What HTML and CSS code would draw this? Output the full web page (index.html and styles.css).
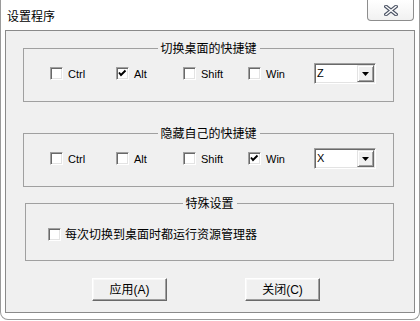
FILE: index.html
```html
<!DOCTYPE html>
<html lang="zh-CN">
<head>
<meta charset="utf-8">
<title>设置程序</title>
<link rel="stylesheet" href="styles.css">
</head>
<body>
<div class="window">
  <div class="titlebar">
    <span class="title">设置程序</span>
    <div class="close">
      <svg width="14" height="11" viewBox="0 0 14 11">
        <path d="M2 1.5 L12 9.5 M12 1.5 L2 9.5" stroke="#4d5566" stroke-width="3.6" stroke-linecap="square" fill="none"/>
        <path d="M2 1.5 L12 9.5 M12 1.5 L2 9.5" stroke="#ffffff" stroke-width="1.4" stroke-linecap="square" fill="none"/>
      </svg>
    </div>
  </div>
  <div class="panel">
    <div class="group g1">
      <span class="gtitle">切换桌面的快捷键</span>
      <div class="row">
        <div class="chk"><span class="box"></span><span class="lbl">Ctrl</span></div>
        <div class="chk"><span class="box"><svg class="tick" width="11" height="11" viewBox="0 0 11 11"><polyline points="2,4.5 4,7 8.5,2.5" fill="none" stroke="#000" stroke-width="1.9"/></svg></span><span class="lbl">Alt</span></div>
        <div class="chk"><span class="box"></span><span class="lbl">Shift</span></div>
        <div class="chk"><span class="box"></span><span class="lbl">Win</span></div>
        <div class="combo"><span class="val">Z</span><span class="drop"><svg width="7" height="4" viewBox="0 0 7 4"><path d="M0 0 H7 L3.5 4 Z" fill="#000"/></svg></span></div>
      </div>
    </div>
    <div class="group g2">
      <span class="gtitle">隐藏自己的快捷键</span>
      <div class="row">
        <div class="chk"><span class="box"></span><span class="lbl">Ctrl</span></div>
        <div class="chk"><span class="box"></span><span class="lbl">Alt</span></div>
        <div class="chk"><span class="box"></span><span class="lbl">Shift</span></div>
        <div class="chk"><span class="box"><svg class="tick" width="11" height="11" viewBox="0 0 11 11"><polyline points="2,4.5 4,7 8.5,2.5" fill="none" stroke="#000" stroke-width="1.9"/></svg></span><span class="lbl">Win</span></div>
        <div class="combo"><span class="val">X</span><span class="drop"><svg width="7" height="4" viewBox="0 0 7 4"><path d="M0 0 H7 L3.5 4 Z" fill="#000"/></svg></span></div>
      </div>
    </div>
    <div class="group g3">
      <span class="gtitle">特殊设置</span>
      <div class="chk wide"><span class="box"></span><span class="cjk">每次切换到桌面时都运行资源管理器</span></div>
    </div>
    <div class="buttons">
      <button class="btn">应用(A)</button>
      <button class="btn">关闭(C)</button>
    </div>
  </div>
</div>
</body>
</html>
```

FILE: styles.css
```css
* { box-sizing: border-box; }
html, body { margin: 0; padding: 0; background: #ffffff; }
body {
  width: 420px;
  height: 321px;
  overflow: hidden;
  font-family: "Liberation Sans", "Noto Sans CJK SC", sans-serif;
  color: #000;
}
.window {
  width: 420px;
  height: 320px;
  background: #ffffff;
  border: 1px solid #9a9a9a;
  border-top: none;
  border-radius: 0 0 8px 8px;
  display: flex;
  flex-direction: column;
}
.titlebar {
  height: 30px;
  display: flex;
  align-items: flex-start;
}
.title {
  font-family: "Noto Sans CJK SC", sans-serif;
  font-size: 12px;
  line-height: 14px;
  padding: 9px 0 0 6px;
  color: #000;
}
.close {
  margin-left: auto;
  margin-right: 5px;
  width: 47px;
  height: 21px;
  border: 1px solid #8d8d8d;
  border-top: none;
  border-radius: 0 0 4px 4px;
  background: linear-gradient(#ffffff, #f1f1f1);
  display: flex;
  align-items: center;
  justify-content: center;
}
.panel {
  margin: 0 4px;
  width: 410px;
  height: 283px;
  border: 1px solid #8a8a8a;
  background: #f0f0f0;
  padding-top: 17px;
  display: flex;
  flex-direction: column;
}
.group {
  position: relative;
  margin-left: 17px;
  width: 371px;
  height: 54px;
  border: 1px solid #a0a0a0;
  padding: 14px 0 0 26px;
}
.g2 { margin-top: 31px; }
.g3 {
  margin-top: 16px;
  margin-left: 19px;
  width: 369px;
  height: 58px;
  padding: 23px 0 0 22px;
}
.gtitle {
  position: absolute;
  top: -8px;
  left: 50%;
  transform: translateX(-50%);
  background: #f0f0f0;
  padding: 0 3px;
  font-family: "Noto Sans CJK SC", sans-serif;
  font-size: 12px;
  line-height: 14px;
  white-space: nowrap;
}
.row {
  display: grid;
  grid-template-columns: 66px 67px 65px 66px 62px;
  align-items: center;
  height: 21px;
}
.chk {
  display: flex;
  align-items: center;
  gap: 5px;
}
.chk.wide { gap: 4px; }
.box {
  width: 13px;
  height: 13px;
  flex: none;
  background: #ffffff;
  border: 1px solid;
  border-color: #a0a0a0 #ffffff #ffffff #a0a0a0;
  box-shadow: inset 1px 1px 0 #696969, inset -1px -1px 0 #e3e3e3;
  position: relative;
}
.tick { display: block; }
.lbl {
  font-size: 11px;
  line-height: 13px;
  margin-top: 1px;
}
.cjk {
  font-family: "Noto Sans CJK SC", sans-serif;
  font-size: 12px;
  line-height: 14px;
}
.combo {
  width: 62px;
  height: 21px;
  border: 1px solid;
  border-color: #a0a0a0 #ffffff #ffffff #a0a0a0;
  box-shadow: inset 1px 1px 0 #696969, inset -1px -1px 0 #e3e3e3;
  background: #ffffff;
  padding: 1px;
  display: flex;
  align-items: stretch;
}
.val {
  flex: 1;
  font-size: 11px;
  line-height: 17px;
  padding-left: 1px;
}
.drop {
  width: 17px;
  flex: none;
  background: #f0f0f0;
  border: 1px solid;
  border-color: #e3e3e3 #696969 #696969 #e3e3e3;
  box-shadow: inset 1px 1px 0 #ffffff, inset -1px -1px 0 #a0a0a0;
  display: flex;
  align-items: center;
  justify-content: center;
}
.buttons {
  margin-top: 17px;
  padding-left: 86px;
  display: flex;
  gap: 78px;
}
.btn {
  width: 75px;
  height: 23px;
  margin: 0;
  padding: 0;
  background: #f0f0f0;
  border: 1px solid;
  border-color: #ffffff #696969 #696969 #ffffff;
  box-shadow: inset -1px -1px 0 #a0a0a0, inset 1px 1px 0 #f8f8f8;
  font-family: "Liberation Sans", "Noto Sans CJK SC", sans-serif;
  font-size: 12px;
  line-height: 14px;
  color: #000;
}
```
